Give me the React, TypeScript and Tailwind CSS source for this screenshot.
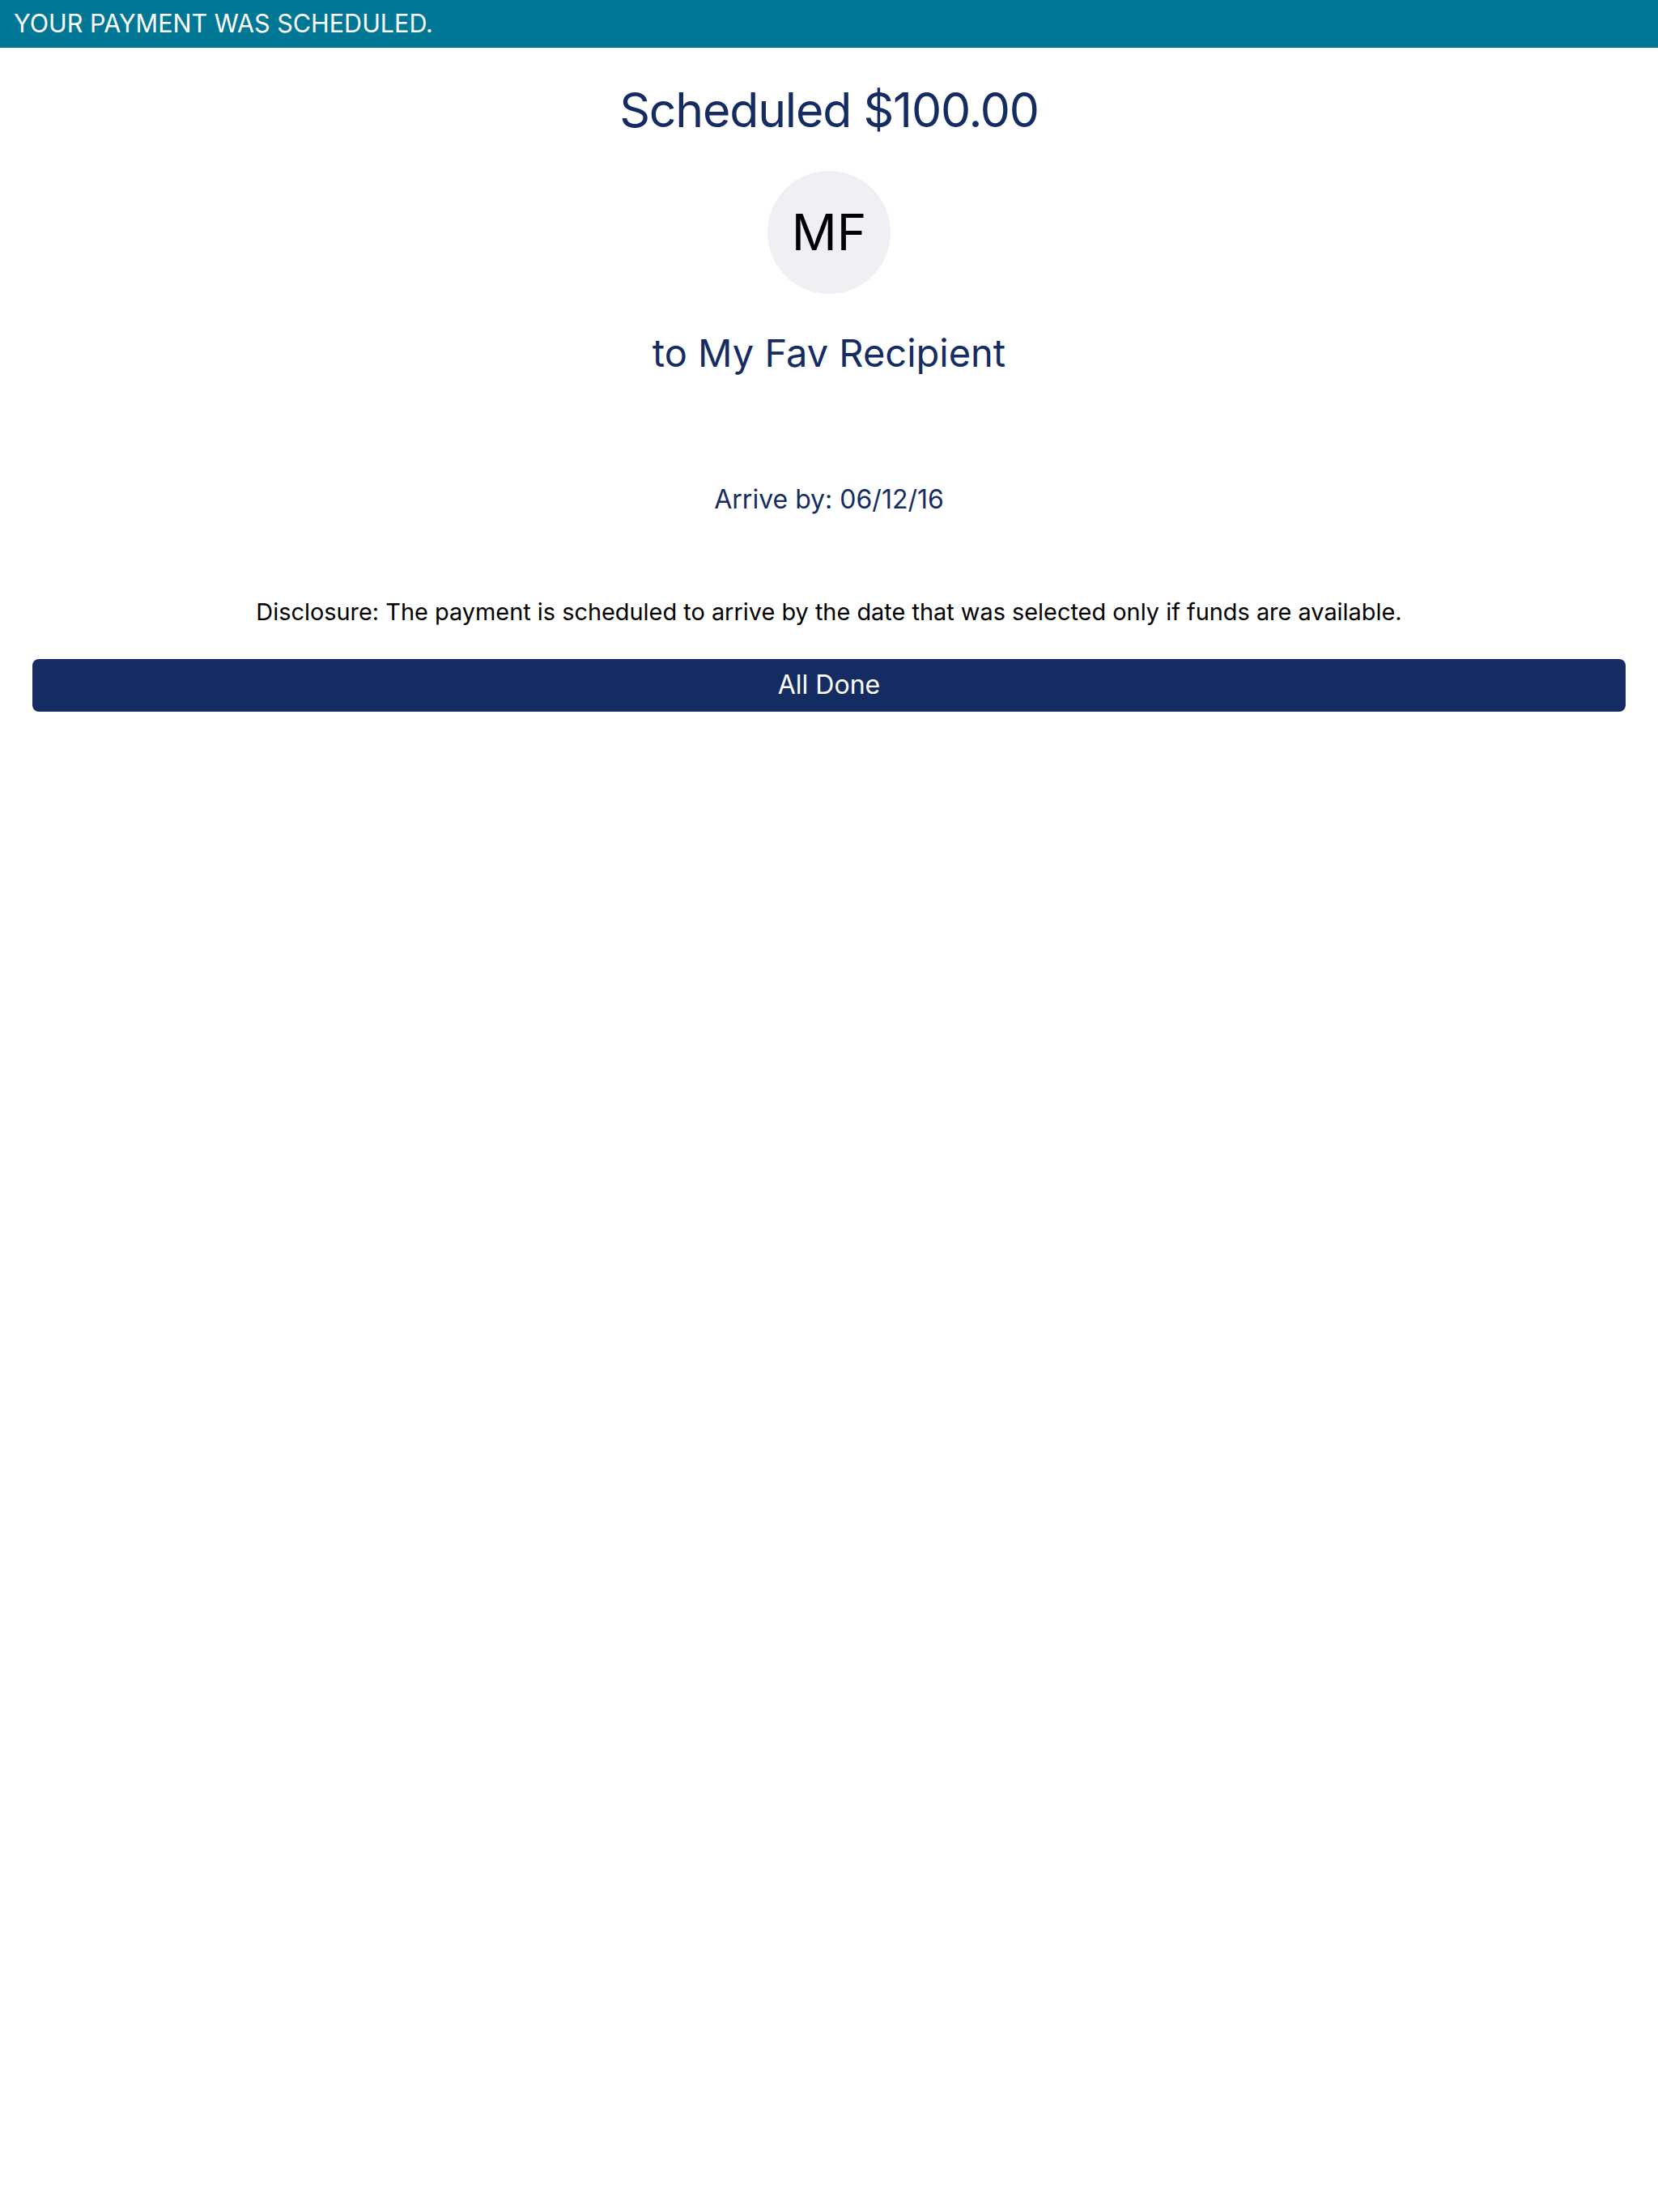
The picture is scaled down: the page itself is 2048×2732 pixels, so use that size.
import React from 'react';

const App: React.FC = () => {
  return (
    <div className="min-h-screen bg-white font-['Inter','Noto_Sans',sans-serif]">
      <div className="h-[59px] bg-[#007794] flex items-center px-[17px]">
        <span className="text-[30.5px] leading-none text-white">YOUR PAYMENT WAS SCHEDULED.</span>
      </div>

      <div className="flex flex-col items-center">
        <h1 className="mt-[47px] text-[59px] leading-none tracking-[-1.2px] font-normal text-[#152c63]">Scheduled $100.00</h1>

        <div className="mt-[46px] w-[152px] h-[152px] rounded-full bg-[#efeff4] flex items-center justify-center">
          <span className="text-[62px] leading-none text-black">MF</span>
        </div>

        <h2 className="mt-[49px] text-[47px] leading-none text-[#152c63]">to My Fav Recipient</h2>

        <p className="mt-[142px] text-[32px] leading-none text-[#152c63]">Arrive by: 06/12/16</p>

        <p className="mt-[109px] text-[28.9px] leading-none text-black">
          Disclosure: The payment is scheduled to arrive by the date that was selected only if funds are available.
        </p>
      </div>

      <div className="px-[40px] mt-[43px]">
        <button className="w-full h-[65px] rounded-[8px] bg-[#152c63] text-white text-[32px] leading-none">
          All Done
        </button>
      </div>
    </div>
  );
};

export default App;
